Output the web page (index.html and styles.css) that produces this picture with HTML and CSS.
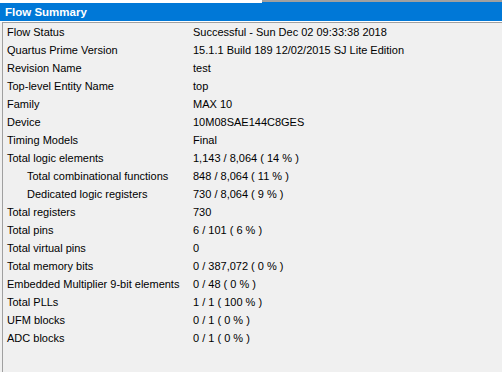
FILE: index.html
```html
<!DOCTYPE html>
<html lang="en">
<head>
  <meta charset="UTF-8">
  <title>Flow Summary</title>
  <link rel="stylesheet" href="styles.css">
</head>
<body>

<div class="strip">
  <div class="strip-left"></div>
  <div class="strip-right"></div>
</div>
<div class="header">Flow Summary</div>

<div class="panel">
  <div class="row"><div class="label">Flow Status</div><div class="value">Successful - Sun Dec 02 09:33:38 2018</div></div>
  <div class="row"><div class="label">Quartus Prime Version</div><div class="value">15.1.1 Build 189 12/02/2015 SJ Lite Edition</div></div>
  <div class="row"><div class="label">Revision Name</div><div class="value">test</div></div>
  <div class="row"><div class="label">Top-level Entity Name</div><div class="value">top</div></div>
  <div class="row"><div class="label">Family</div><div class="value">MAX 10</div></div>
  <div class="row"><div class="label">Device</div><div class="value">10M08SAE144C8GES</div></div>
  <div class="row"><div class="label">Timing Models</div><div class="value">Final</div></div>
  <div class="row"><div class="label">Total logic elements</div><div class="value">1,143 / 8,064 ( 14 % )</div></div>
  <div class="row"><div class="label sub">Total combinational functions</div><div class="value">848 / 8,064 ( 11 % )</div></div>
  <div class="row"><div class="label sub">Dedicated logic registers</div><div class="value">730 / 8,064 ( 9 % )</div></div>
  <div class="row"><div class="label">Total registers</div><div class="value">730</div></div>
  <div class="row"><div class="label">Total pins</div><div class="value">6 / 101 ( 6 % )</div></div>
  <div class="row"><div class="label">Total virtual pins</div><div class="value">0</div></div>
  <div class="row"><div class="label">Total memory bits</div><div class="value">0 / 387,072 ( 0 % )</div></div>
  <div class="row"><div class="label">Embedded Multiplier 9-bit elements</div><div class="value">0 / 48 ( 0 % )</div></div>
  <div class="row"><div class="label">Total PLLs</div><div class="value">1 / 1 ( 100 % )</div></div>
  <div class="row"><div class="label">UFM blocks</div><div class="value">0 / 1 ( 0 % )</div></div>
  <div class="row"><div class="label">ADC blocks</div><div class="value">0 / 1 ( 0 % )</div></div>
</div>

</body>
</html>
```

FILE: styles.css
```css
html, body {
  height: 100%;
}
body {
  font-family: "Liberation Sans", Arial, sans-serif;
  font-size: 11px;
  margin: 0;
  padding: 0;
  background-color: #f0f0f0;
  color: #000;
  display: flex;
  flex-direction: column;
  overflow: hidden;
}
.strip {
  display: flex;
  height: 3px;
  flex: none;
}
.strip-left {
  width: 262px;
  background-color: #fff;
}
.strip-right {
  flex: 1;
  border-top: 2px solid #a0a0a0;
  background-color: #0078d7;
}
.header {
  flex: none;
  height: 18px;
  line-height: 18px;
  padding-left: 5px;
  background-color: #0078d7;
  color: #fff;
  font-weight: bold;
  font-size: 11.5px;
  border-bottom: 1px solid #fff;
}
.panel {
  flex: 1;
  margin-left: 2px;
  border-left: 1px solid #a0a0a0;
  border-top: 1px solid #a0a0a0;
}
.row {
  display: grid;
  grid-template-columns: 190px 1fr;
  height: 18px;
  line-height: 18px;
  white-space: nowrap;
}
.label {
  padding-left: 4px;
}
.label.sub {
  padding-left: 24px;
}
```
